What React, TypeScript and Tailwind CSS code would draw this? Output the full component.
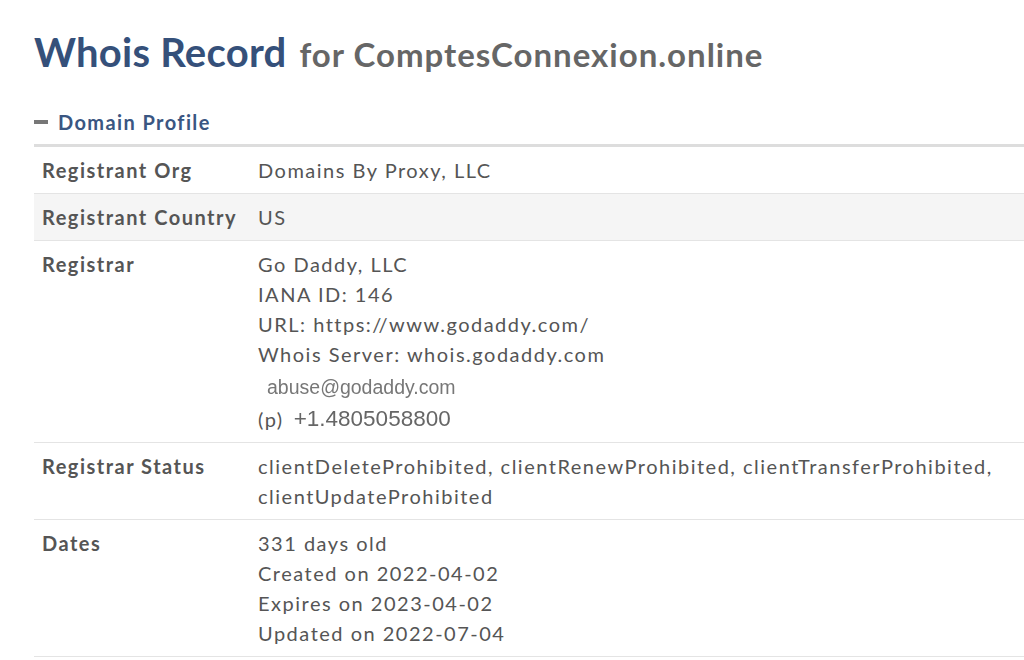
function Row({
  label,
  shaded,
  children,
}: {
  label: string
  shaded?: boolean
  children: React.ReactNode
}) {
  return (
    <div className={`flex border-b border-[#e4e4e4] py-2 ${shaded ? 'bg-[#f5f5f5]' : 'bg-white'}`}>
      <div className="w-[224px] shrink-0 pl-2 font-bold leading-[30px]">{label}</div>
      <div className="flex-1 leading-[30px]">{children}</div>
    </div>
  )
}

export default function App() {
  return (
    <div className="h-[660px] w-[1024px] overflow-hidden bg-white font-['Lato',sans-serif] text-[20px] tracking-[1.5px] text-[#555]">
      <div className="w-[1040px] pl-[34px] pt-[22px]">
        <h1 className="flex items-baseline gap-[13px] whitespace-nowrap">
          <span className="text-[40px] font-bold tracking-[0.25px] text-[#35507a]">Whois Record</span>
          <span className="text-[33px] font-bold tracking-[1px] text-[#666]">for ComptesConnexion.online</span>
        </h1>

        <div className="mt-[25px] flex items-center gap-[10px] pb-[7px]">
          <span className="h-[4px] w-[14px] bg-[#777]" />
          <span className="text-[20px] font-bold tracking-[1.4px] text-[#3a5682]">Domain Profile</span>
        </div>

        <div className="border-t-[3px] border-[#dddddd]">
          <Row label="Registrant Org">Domains By Proxy, LLC</Row>
          <Row label="Registrant Country" shaded>
            US
          </Row>
          <Row label="Registrar">
            <div>Go Daddy, LLC</div>
            <div>IANA ID: 146</div>
            <div>URL: https://www.godaddy.com/</div>
            <div>Whois Server: whois.godaddy.com</div>
            <div className="flex h-[35px] items-center pl-[9px] font-['Liberation_Sans',sans-serif] text-[19.5px] tracking-normal text-[#777] blur-[0.3px]">
              abuse@godaddy.com
            </div>
            <div className="flex items-center gap-[10px] leading-[30px]">
              <span>(p)</span>
              <span className="font-['Liberation_Sans',sans-serif] text-[22.5px] tracking-normal text-[#666] blur-[0.3px]">
                +1.4805058800
              </span>
            </div>
          </Row>
          <Row label="Registrar Status">
            clientDeleteProhibited, clientRenewProhibited, clientTransferProhibited, clientUpdateProhibited
          </Row>
          <Row label="Dates">
            <div>331 days old</div>
            <div>Created on 2022-04-02</div>
            <div>Expires on 2023-04-02</div>
            <div>Updated on 2022-07-04</div>
          </Row>
        </div>
      </div>
    </div>
  )
}
